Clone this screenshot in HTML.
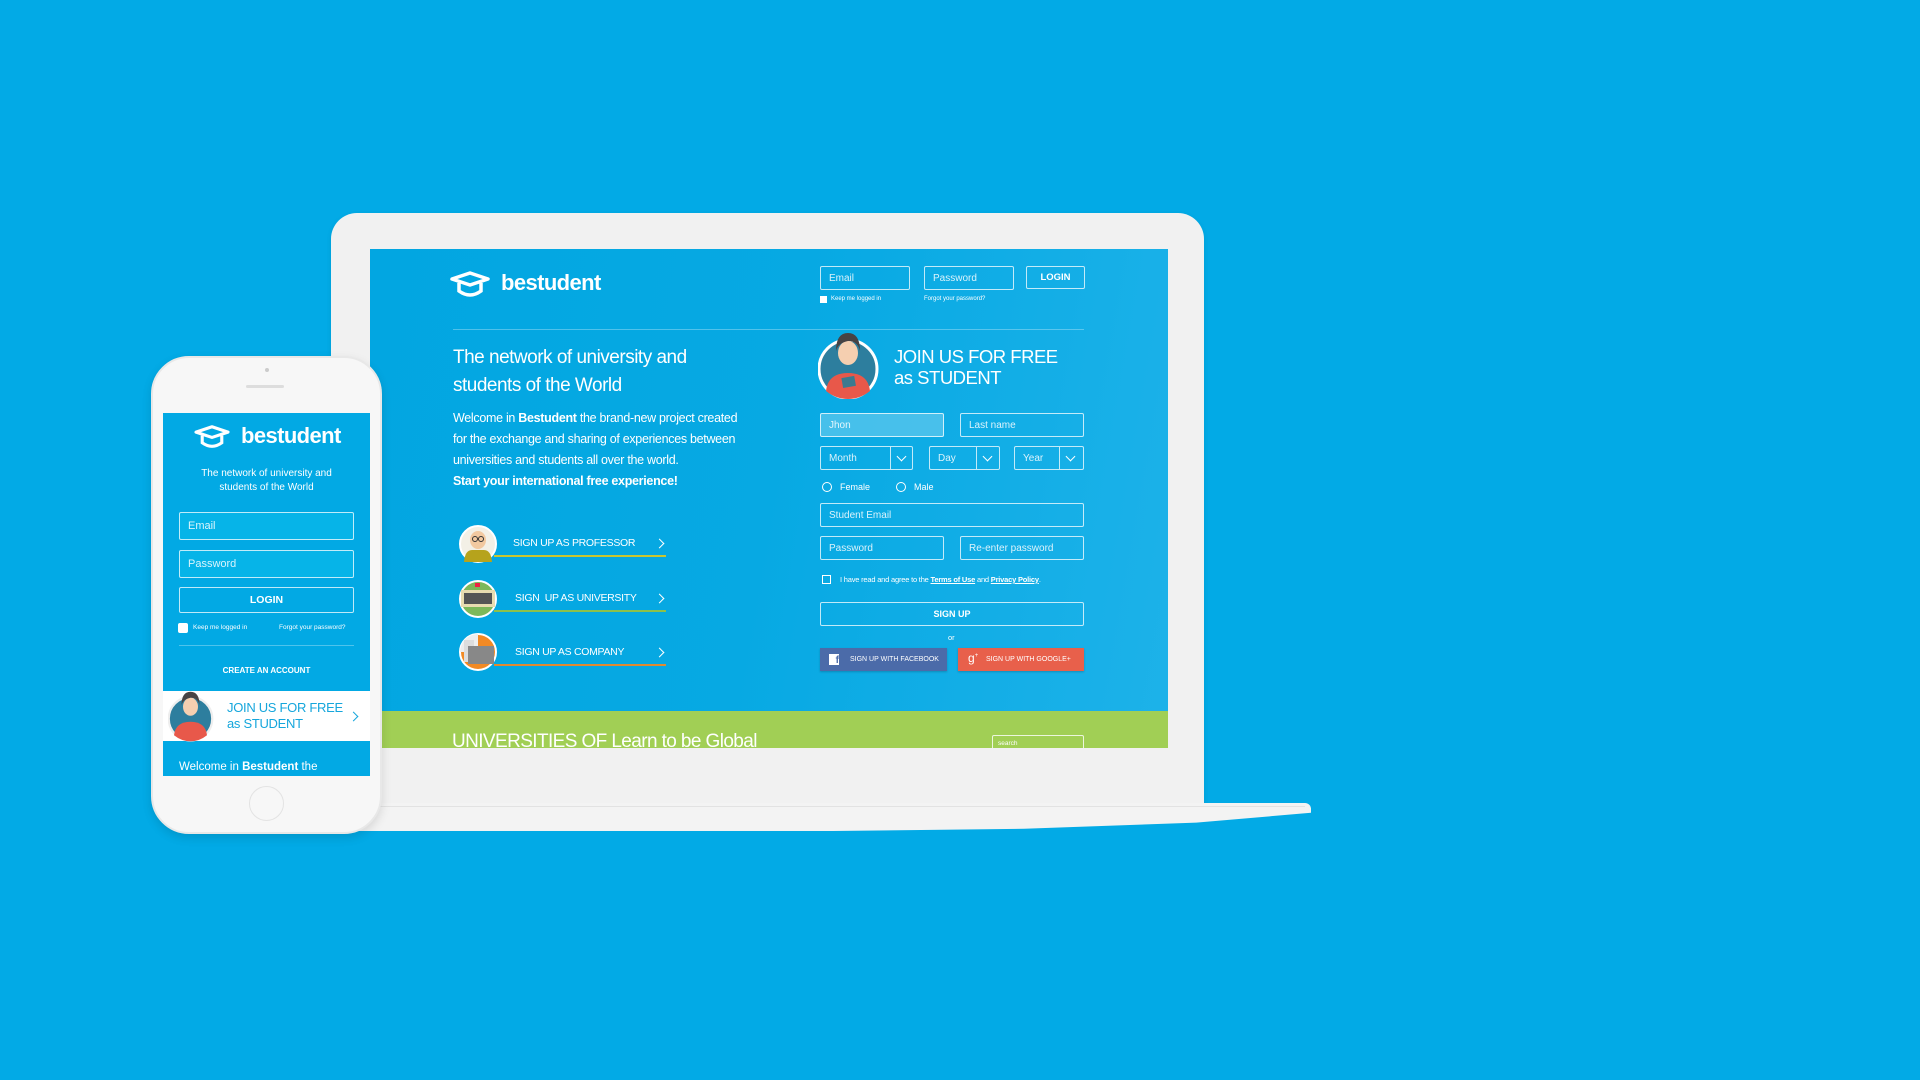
<!DOCTYPE html>
<html><head><meta charset="utf-8"><style>
*{margin:0;padding:0;box-sizing:border-box}
body{width:1920px;height:1080px;background:#02aae6;position:relative;overflow:hidden;font-family:"Liberation Sans",sans-serif;color:#fff}
.a{position:absolute}
.inp{position:absolute;border:1.5px solid rgba(255,255,255,.75);border-radius:2px;font-size:10px;color:rgba(255,255,255,.85);padding-left:8px;display:flex;align-items:center}
.sel .dv{position:absolute;top:0;bottom:0;border-left:1.5px solid rgba(255,255,255,.75)}
.chev{position:absolute;width:7px;height:7px;border-right:1.5px solid #fff;border-bottom:1.5px solid #fff;transform:rotate(45deg)}
.rchev{position:absolute;width:7px;height:7px;border-right:1.5px solid #fff;border-top:1.5px solid #fff;transform:rotate(45deg)}
.su{position:absolute;font-size:10.5px;letter-spacing:-.3px}
.ln{position:absolute;height:2px}
</style></head><body>

<!-- laptop -->
<div class="a" style="left:331px;top:213px;width:873px;height:592px;background:#f1f1f1;border-radius:26px 26px 0 0;box-shadow:0 2px 6px rgba(0,0,0,.08)"></div>
<div class="a" style="left:355px;top:803px;width:956px;height:28px;background:#f3f3f3;border-radius:0 6px 0 0 / 0 6px 0 0;clip-path:polygon(0 0,100% 0,100% 35%,88% 70%,70% 92%,50% 100%,0 100%)"></div>
<div class="a" style="left:355px;top:806px;width:950px;height:1px;background:#e2e2e2"></div>

<div class="a" style="left:370px;top:249px;width:798px;height:499px;background:linear-gradient(100deg,#02a6e1 0%,#07a9e3 50%,#1db2e9 100%);overflow:hidden">
  <svg class="a" style="left:79px;top:22px" width="42" height="27" viewBox="0 0 42 27"><path d="M3 8 L21 2 L39 8 L21 14 Z" fill="none" stroke="#fff" stroke-width="3.5" stroke-linejoin="round"/><path d="M10 12 V20 Q21 28 32 20 V12" fill="none" stroke="#fff" stroke-width="3.5"/></svg>
  <div class="a" style="left:131px;top:21px;font-size:22px;font-weight:bold;letter-spacing:-.6px">bestudent</div>

  <div class="inp" style="left:450px;top:17px;width:90px;height:24px">Email</div>
  <div class="inp" style="left:554px;top:17px;width:90px;height:24px">Password</div>
  <div class="inp" style="left:656px;top:17px;width:59px;height:23px;justify-content:center;padding:0;font-weight:bold;font-size:9.5px;color:#fff">LOGIN</div>
  <div class="a" style="left:450px;top:47px;width:7px;height:7px;background:#fff"></div>
  <div class="a" style="left:461px;top:47px;font-size:6px">Keep me logged in</div>
  <div class="a" style="left:554px;top:47px;font-size:6px">Forgot your password?</div>
  <div class="a" style="left:83px;top:80px;width:631px;height:1px;background:rgba(255,255,255,.3)"></div>

  <div class="a" style="left:83px;top:95px;font-size:19px;line-height:28px;letter-spacing:-.5px">The network of university and<br>students of the World</div>
  <div class="a" style="left:83px;top:159px;font-size:12.5px;line-height:21px;letter-spacing:-.3px">Welcome in <b>Bestudent</b> the brand-new project created<br>for the exchange and sharing of experiences between<br>universities and students all over the world.<br><b>Start your international free experience!</b></div>

  <svg class="a" style="left:88px;top:275px" width="40" height="40" viewBox="0 0 40 40"><circle cx="20" cy="20" r="18" fill="#f3f0e6" stroke="#fff" stroke-width="2"/><ellipse cx="20" cy="16" rx="8" ry="9" fill="#f2c9a0"/><path d="M6 38 Q7 26 14 26 L26 26 Q33 26 34 38Z" fill="#b6a31c"/><circle cx="17" cy="15" r="2.5" fill="none" stroke="#333"/><circle cx="23" cy="15" r="2.5" fill="none" stroke="#333"/></svg>
  <div class="su" style="left:143px;top:288px">SIGN UP AS PROFESSOR</div>
  <div class="rchev" style="left:286px;top:291px"></div>
  <div class="ln" style="left:124px;top:306px;width:172px;background:#c9c631"></div>

  <svg class="a" style="left:88px;top:330px" width="40" height="40" viewBox="0 0 40 40"><circle cx="20" cy="20" r="18" fill="#7cb85a" stroke="#fff" stroke-width="2"/><rect x="3" y="11" width="34" height="17" fill="#e8dcb0"/><rect x="6" y="14" width="28" height="11" fill="#555"/><rect x="17" y="4" width="5" height="4" fill="#e24"/></svg>
  <div class="su" style="left:145px;top:343px">SIGN &nbsp;UP AS UNIVERSITY</div>
  <div class="rchev" style="left:286px;top:346px"></div>
  <div class="ln" style="left:124px;top:361px;width:172px;background:#8cc04a"></div>

  <svg class="a" style="left:88px;top:383px" width="40" height="40" viewBox="0 0 40 40"><circle cx="20" cy="20" r="18" fill="#f28a24" stroke="#fff" stroke-width="2"/><path d="M2 20 A18 18 0 0 1 20 2 V20Z" fill="#eee"/><rect x="6" y="8" width="10" height="22" fill="#ddd"/><rect x="10" y="14" width="26" height="18" fill="#888"/></svg>
  <div class="su" style="left:145px;top:397px">SIGN UP AS COMPANY</div>
  <div class="rchev" style="left:286px;top:400px"></div>
  <div class="ln" style="left:124px;top:415px;width:172px;background:#e08a30"></div>

  <svg class="a" style="left:448px;top:72px" width="64" height="78" viewBox="0 0 64 78"><circle cx="30" cy="48" r="29" fill="#2d7e9e" stroke="#fff" stroke-width="3"/><path d="M8 70 Q10 52 30 52 Q50 52 52 70 Q42 78 30 78 Q18 78 8 70Z" fill="#e8584a"/><ellipse cx="30" cy="32" rx="10" ry="12" fill="#f5cfb0"/><path d="M18 30 Q18 12 30 12 Q42 12 42 30 Q40 20 30 20 Q20 22 18 30Z" fill="#474344"/><rect x="24" y="56" width="13" height="10" fill="#3b7a8f" transform="rotate(-10 30 60)"/></svg>
  <div class="a" style="left:524px;top:97px;font-size:18.5px;line-height:21px;letter-spacing:-.5px">JOIN US FOR FREE<br>as STUDENT</div>

  <div class="inp" style="left:450px;top:164px;width:124px;height:24px;background:rgba(120,210,240,.55)">Jhon</div>
  <div class="inp" style="left:590px;top:164px;width:124px;height:24px">Last name</div>
  <div class="inp sel" style="left:450px;top:197px;width:93px;height:24px">Month<div class="dv" style="left:69px"></div><div class="chev" style="left:77px;top:6px"></div></div>
  <div class="inp sel" style="left:559px;top:197px;width:71px;height:24px">Day<div class="dv" style="left:46px"></div><div class="chev" style="left:54px;top:6px"></div></div>
  <div class="inp sel" style="left:644px;top:197px;width:70px;height:24px">Year<div class="dv" style="left:44px"></div><div class="chev" style="left:52px;top:6px"></div></div>
  <div class="a" style="left:452px;top:233px;width:10px;height:10px;border:1.3px solid #fff;border-radius:50%"></div>
  <div class="a" style="left:470px;top:233px;font-size:9px">Female</div>
  <div class="a" style="left:526px;top:233px;width:10px;height:10px;border:1.3px solid #fff;border-radius:50%"></div>
  <div class="a" style="left:544px;top:233px;font-size:9px">Male</div>
  <div class="inp" style="left:450px;top:254px;width:264px;height:24px">Student Email</div>
  <div class="inp" style="left:450px;top:287px;width:124px;height:24px">Password</div>
  <div class="inp" style="left:590px;top:287px;width:124px;height:24px">Re-enter password</div>
  <div class="a" style="left:452px;top:326px;width:9px;height:9px;border:1.2px solid #fff"></div>
  <div class="a" style="left:470px;top:326px;font-size:7.5px;letter-spacing:-.2px">I have read and agree to the <b style="text-decoration:underline">Terms of Use</b> and <b style="text-decoration:underline">Privacy Policy</b>.</div>
  <div class="inp" style="left:450px;top:353px;width:264px;height:24px;justify-content:center;padding:0;font-weight:bold;color:#fff;font-size:9px">SIGN UP</div>
  <div class="a" style="left:578px;top:384px;font-size:7.5px">or</div>
  <div class="a" style="left:450px;top:399px;width:127px;height:23px;background:#4b6ba9;box-shadow:0 1px 2px rgba(0,0,0,.2);font-size:7px;display:flex;align-items:center;padding-left:30px">SIGN UP WITH FACEBOOK</div>
  <div class="a" style="left:459px;top:405px;width:10px;height:11px;background:#fff;color:#4b6ba9;font-size:10px;font-weight:bold;text-align:right;line-height:13px">f</div>
  <div class="a" style="left:588px;top:399px;width:126px;height:23px;background:#e8604b;box-shadow:0 1px 2px rgba(0,0,0,.2);font-size:7px;display:flex;align-items:center;padding-left:28px">SIGN UP WITH GOOGLE+</div>
  <div class="a" style="left:598px;top:402px;font-size:12px">g<sup style="font-size:6px">+</sup></div>

  <div class="a" style="left:0;top:462px;width:798px;height:40px;background:#a1cf55"></div>
  <div class="a" style="left:82px;top:482px;font-size:19px;letter-spacing:-.6px">UNIVERSITIES OF Learn to be Global</div>
  <div class="a" style="left:622px;top:486px;width:92px;height:16px;border:1px solid rgba(255,255,255,.8);border-radius:2px;font-size:6.5px;padding:4px 5px">search</div>
</div>

<!-- phone -->
<div class="a" style="left:151px;top:356px;width:231px;height:478px;background:#f7f7f7;border-radius:38px;border:2px solid #e8e8e8;box-shadow:0 4px 10px rgba(0,0,0,.12)"></div>
<div class="a" style="left:265px;top:368px;width:4px;height:4px;border-radius:50%;background:#ccc"></div>
<div class="a" style="left:246px;top:385px;width:38px;height:3px;border-radius:2px;background:#ddd"></div>
<div class="a" style="left:249px;top:786px;width:35px;height:35px;border-radius:50%;border:1.5px solid #e3e3e3"></div>
<div class="a" style="left:163px;top:413px;width:207px;height:363px;background:#02a9e4;overflow:hidden">
  <svg class="a" style="left:30px;top:12px" width="38" height="24" viewBox="0 0 42 27"><path d="M3 8 L21 2 L39 8 L21 14 Z" fill="none" stroke="#fff" stroke-width="3.5" stroke-linejoin="round"/><path d="M10 12 V20 Q21 28 32 20 V12" fill="none" stroke="#fff" stroke-width="3.5"/></svg>
  <div class="a" style="left:78px;top:10px;font-size:22px;font-weight:bold;letter-spacing:-.6px">bestudent</div>
  <div class="a" style="left:0;top:54px;width:207px;text-align:center;font-size:10px;line-height:14px">The network of university and<br>students of the World</div>
  <div class="inp" style="left:16px;top:99px;width:175px;height:28px;font-size:11px;background:#06b4e8">Email</div>
  <div class="inp" style="left:16px;top:137px;width:175px;height:28px;font-size:11px;background:#06b4e8">Password</div>
  <div class="inp" style="left:16px;top:174px;width:175px;height:26px;justify-content:center;padding:0;font-weight:bold;color:#fff;font-size:10.5px">LOGIN</div>
  <div class="a" style="left:15px;top:210px;width:10px;height:10px;background:#fff;border-radius:2px"></div>
  <div class="a" style="left:30px;top:211px;font-size:6.5px">Keep me logged in</div>
  <div class="a" style="left:116px;top:211px;font-size:6.5px">Forgot your password?</div>
  <div class="a" style="left:16px;top:232px;width:175px;height:1px;background:rgba(255,255,255,.3)"></div>
  <div class="a" style="left:0;top:253px;width:207px;text-align:center;font-size:8px;font-weight:bold">CREATE AN ACCOUNT</div>
  <div class="a" style="left:0;top:278px;width:207px;height:50px;background:#fff"></div>
  <svg class="a" style="left:5px;top:268px" width="48" height="62" viewBox="0 0 64 78"><circle cx="30" cy="48" r="29" fill="#2d7e9e" stroke="#eee" stroke-width="3"/><path d="M8 70 Q10 52 30 52 Q50 52 52 70 Q42 78 30 78 Q18 78 8 70Z" fill="#e8584a"/><ellipse cx="30" cy="32" rx="10" ry="12" fill="#f5cfb0"/><path d="M18 30 Q18 12 30 12 Q42 12 42 30 Q40 20 30 20 Q20 22 18 30Z" fill="#474344"/></svg>
  <div class="a" style="left:64px;top:287px;font-size:13px;line-height:16px;color:#15a6dc;letter-spacing:-.3px">JOIN US FOR FREE<br>as STUDENT</div>
  <div class="a" style="left:187px;top:300px;width:7px;height:7px;border-right:1.5px solid #15a6dc;border-top:1.5px solid #15a6dc;transform:rotate(45deg)"></div>
  <div class="a" style="left:16px;top:348px;font-size:11.5px">Welcome in <b>Bestudent</b> the</div>
</div>
</body></html>
